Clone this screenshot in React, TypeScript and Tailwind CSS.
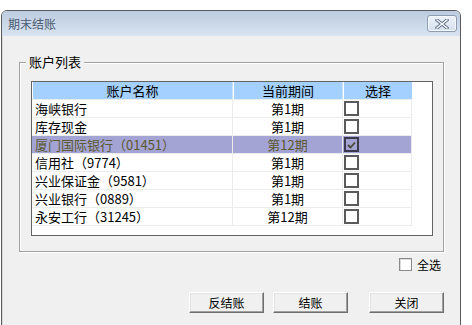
import React from "react";

const rows = [
  { name: "海峡银行", period: "第1期", checked: false },
  { name: "库存现金", period: "第1期", checked: false },
  { name: "厦门国际银行（01451）", period: "第12期", checked: true },
  { name: "信用社（9774）", period: "第1期", checked: false },
  { name: "兴业保证金（9581）", period: "第1期", checked: false },
  { name: "兴业银行（0889）", period: "第1期", checked: false },
  { name: "永安工行（31245）", period: "第12期", checked: false },
];

function CloseButton() {
  return (
    <div className="w-[30px] h-[17px] rounded-[3px] border border-[#8d9cb3] bg-gradient-to-b from-[#eef3f9] to-[#d5e0ee] flex items-center justify-center shadow-[inset_0_0_0_1px_#f4f7fb]">
      <svg width="14" height="10" viewBox="0 0 14 10">
        <path d="M2 1 L12 9 M12 1 L2 9" stroke="#5f6f86" strokeWidth="3.2" strokeLinecap="square" />
        <path d="M2 1 L12 9 M12 1 L2 9" stroke="#ffffff" strokeWidth="1.4" strokeLinecap="square" />
      </svg>
    </div>
  );
}

function WinButton({ label }: { label: string }) {
  return (
    <button className="w-[75px] h-[21px] bg-[#f0f0f0] text-[12px] text-black border-t border-l border-t-white border-l-white border-r border-b border-r-[#6e6e6e] border-b-[#6e6e6e] shadow-[inset_-1px_-1px_0_#a0a0a0,inset_1px_1px_0_#e3e3e3] flex items-center justify-center leading-none">
      {label}
    </button>
  );
}

function CheckCell({ checked }: { checked: boolean }) {
  return (
    <div
      className={`w-[15px] h-[15px] border-2 flex items-center justify-center ${
        checked ? "border-[#3a3a4a]" : "border-[#5a5a5a] bg-white"
      }`}
    >
      {checked && (
        <svg width="9" height="8" viewBox="0 0 9 8">
          <path d="M1 4 L3.5 6.5 L8 1.5" stroke="#4a4830" strokeWidth="1.8" fill="none" />
        </svg>
      )}
    </div>
  );
}

export default function App() {
  return (
    <div
      className="w-[472px] h-[325px] bg-white overflow-hidden"
      style={{ fontFamily: '"Noto Sans CJK SC", "Noto Sans", sans-serif' }}
    >
      <div className="ml-px mt-[10px] w-[460px] h-[330px] border border-[#5a5a5a] rounded-t-[6px] overflow-hidden flex flex-col">
        {/* title bar */}
        <div className="h-[25px] bg-gradient-to-b from-[#bccbdf] to-[#d8e4f1] flex items-center justify-between pl-[6px] pr-[3px] shrink-0">
          <span className="text-[12px] text-[#4b5a70] leading-none">期末结账</span>
          <CloseButton />
        </div>

        {/* body */}
        <div className="flex-1 bg-[#f0f0f0] border-l border-[#d9d9d9] flex flex-col">
          {/* group box */}
          <div className="relative mt-[26px] ml-[16px] w-[425px] h-[190px] border border-[#a0a0a0] shadow-[1px_1px_0_#fff,inset_1px_1px_0_#fff] pt-[18px] pl-[11px]">
            <span className="absolute -top-[9px] left-[6px] bg-[#f0f0f0] px-[3px] text-[13px] leading-[16px] text-black">
              账户列表
            </span>

            {/* table */}
            <div className="w-[402px] h-[155px] border border-[#646464] bg-white text-[13px] text-black">
              <div className="flex h-[17px] leading-[17px]">
                <div className="w-[201px] bg-[#a3d0fe] border-l border-white border-r border-r-[#c9e2fb] text-center">账户名称</div>
                <div className="w-[110px] bg-[#a3d0fe] border-l border-white border-r border-r-[#c9e2fb] text-center">当前期间</div>
                <div className="w-[69px] bg-[#a3d0fe] border-l border-white text-center">选择</div>
              </div>
              {rows.map((r) => (
                <div key={r.name} className="flex h-[18px]">
                  <div
                    className={`w-[380px] flex border-t border-[#ececec] ${
                      r.checked ? "bg-[#a3a3d4] text-[#5c5930]" : ""
                    }`}
                  >
                    <div className="w-[201px] pl-[3px] border-r border-[#ececec] leading-[17px] whitespace-nowrap">{r.name}</div>
                    <div className="w-[110px] text-center border-r border-[#ececec] leading-[17px]">{r.period}</div>
                    <div className="w-[69px] pl-[1px] pt-[1px] border-r border-[#ececec]">
                      <CheckCell checked={r.checked} />
                    </div>
                  </div>
                </div>
              ))}
              <div className="h-[10px] border-t border-[#ececec] w-[380px]" />
            </div>
          </div>

          {/* select all */}
          <div className="flex justify-end items-center pr-[19px] mt-[6px] gap-[5px]">
            <div className="w-[13px] h-[13px] border border-[#8a8a8a] bg-white shadow-[inset_1px_1px_0_#dcdcdc]" />
            <span className="text-[12px] leading-none text-black">全选</span>
          </div>

          {/* buttons */}
          <div className="flex mt-[21px] ml-[186px]">
            <WinButton label="反结账" />
            <div className="w-[9px]" />
            <WinButton label="结账" />
            <div className="w-[21px]" />
            <WinButton label="关闭" />
          </div>
        </div>
      </div>
    </div>
  );
}
